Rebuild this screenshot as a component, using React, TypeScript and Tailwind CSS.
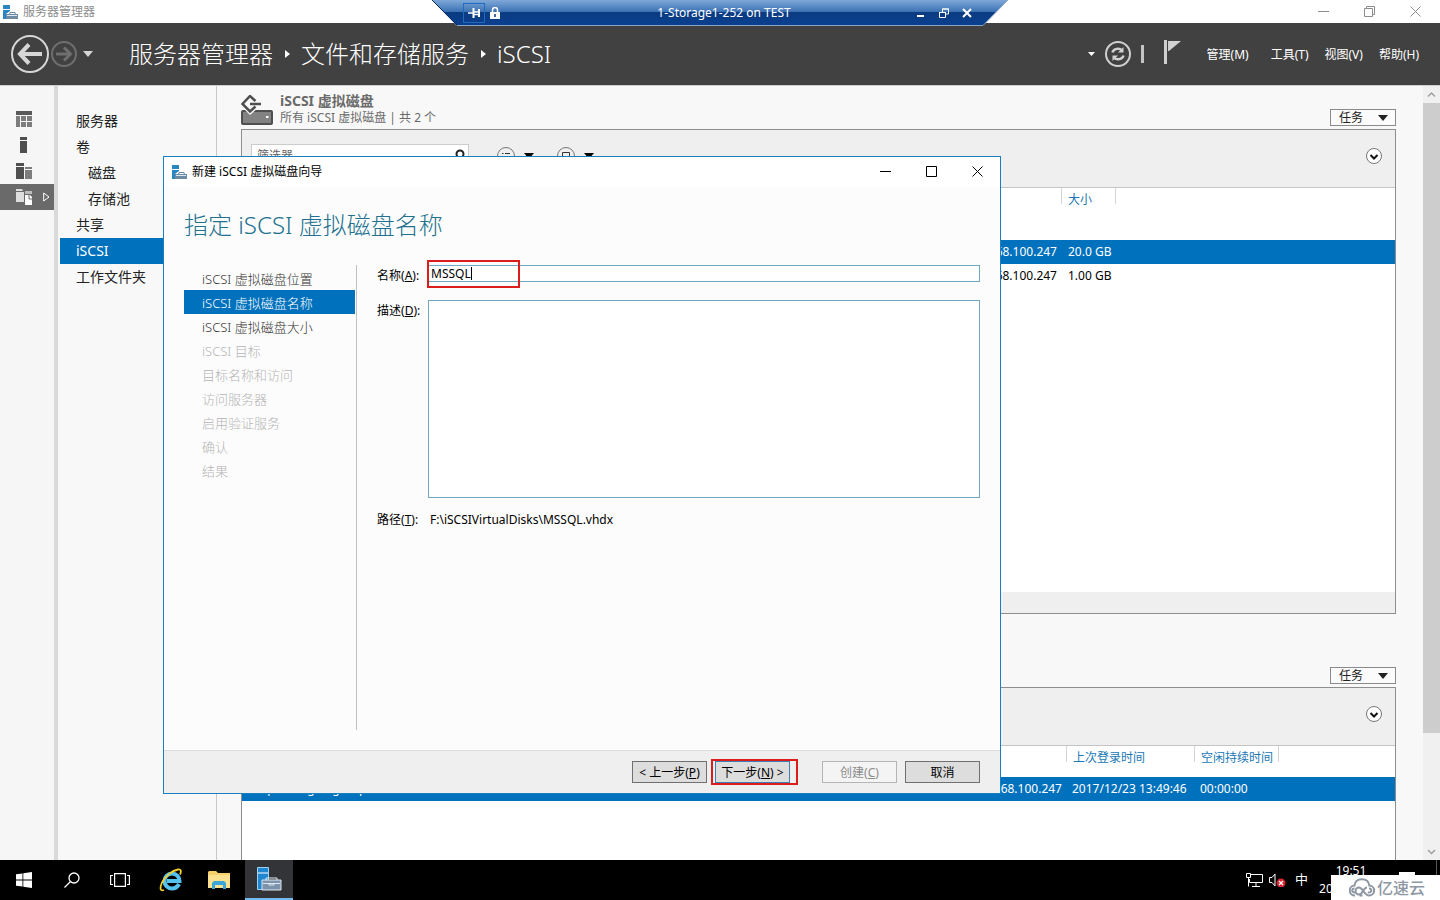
import { ReactNode, useState } from "react";
import clsx from "clsx";

const NAV_ITEMS = [
  { label: "服务器" },
  { label: "卷" },
  { label: "磁盘", nested: true },
  { label: "存储池", nested: true },
  { label: "共享" },
  { label: "iSCSI", active: true },
  { label: "工作文件夹" },
];

const STEPS = [
  { label: "iSCSI 虚拟磁盘位置", state: "done" },
  { label: "iSCSI 虚拟磁盘名称", state: "current" },
  { label: "iSCSI 虚拟磁盘大小", state: "done" },
  { label: "iSCSI 目标", state: "disabled" },
  { label: "目标名称和访问", state: "disabled" },
  { label: "访问服务器", state: "disabled" },
  { label: "启用验证服务", state: "disabled" },
  { label: "确认", state: "disabled" },
  { label: "结果", state: "disabled" },
];

const MENUS = ["管理(M)", "工具(T)", "视图(V)", "帮助(H)"];

const DISKS = [
  { address: "192.168.100.247", size: "20.0 GB", selected: true },
  { address: "192.168.100.247", size: "1.00 GB", selected: false },
];

const ServerIcon = () => (
  <svg width="15" height="14" viewBox="0 0 15 14" aria-hidden="true">
    <path d="M0 0h7v4H0zM0 5h7v1L3 9v5H0z" fill="#2a86c0" />
    <path d="M3 9h3l1-2h5l1 2h2v5H3z" fill="#6d8ba3" />
    <path d="M7 9l.7-1h3.600l.7 1z" fill="#fff" />
    <path d="M4 10.500h10" stroke="#dbe6ee" />
  </svg>
);

const Caret = ({ className }: { className?: string }) => (
  <svg width="10" height="6" viewBox="0 0 10 6" className={className} aria-hidden="true">
    <path d="M0 0h10L5 6z" fill="currentColor" />
  </svg>
);

const Crumb = () => (
  <svg width="5" height="8" viewBox="0 0 5 8" className="mr-[11px] ml-3 shrink-0" aria-hidden="true">
    <path d="M0 0l5 4-5 4z" fill="#fff" />
  </svg>
);

const WindowButton = ({
  label,
  path,
  className,
}: {
  label: string;
  path: string;
  className?: string;
}) => (
  <button
    type="button"
    aria-label={label}
    className={clsx("flex h-full w-[46px] items-center justify-center", className)}
  >
    <svg width="11" height="11" viewBox="0 0 11 11" fill="none" stroke="currentColor">
      <path d={path} />
    </svg>
  </button>
);

const Key = ({ text, letter }: { text: string; letter: string }) => (
  <>
    {text}(<u className="underline-offset-1">{letter}</u>)
  </>
);

const RemoteBar = () => (
  <div className="absolute top-0 left-1/2 flex h-[26px] w-[576px] -translate-x-1/2 items-center">
    <svg
      className="absolute inset-0"
      width="576"
      height="26"
      viewBox="0 0 576 26"
      aria-hidden="true"
    >
      <defs>
        <linearGradient id="bar" x1="0" y1="0" x2="0" y2="1">
          <stop offset="0" stopColor="#7fa8d8" />
          <stop offset="0.46" stopColor="#3c72b4" />
          <stop offset="0.47" stopColor="#0b3b80" />
          <stop offset="1" stopColor="#0a4090" />
        </linearGradient>
      </defs>
      <path d="M0 0h576l-25 25.500H25z" fill="url(#bar)" />
      <path d="M0 0l25 25.500h526L576 0" fill="none" stroke="#8ba5c6" />
      <path d="M0 0l25 25" stroke="#0a2c5c" />
    </svg>
    <div className="relative flex w-full items-center text-white">
      <button
        type="button"
        aria-label="Pin"
        className="ml-[31px] flex h-5 w-[22px] items-center justify-center border border-[#1d6cc0]"
      >
        <svg width="12" height="10" viewBox="0 0 12 10" fill="none" stroke="#fff">
          <path d="M0 5h5M6 4h5M6 6.500h5" strokeWidth="1.500" />
          <path d="M5.500 0v10M11 1v8" strokeWidth="2" />
        </svg>
      </button>
      <svg width="10" height="12" viewBox="0 0 10 12" className="ml-[5px]" aria-hidden="true">
        <path d="M2.500 6V3a2.500 2.500 0 0 1 5 0v3" fill="none" stroke="#fff" strokeWidth="1.500" />
        <path d="M0 5h10v7H0z" fill="#fff" />
        <path d="M5 7v3" stroke="#0b3b80" strokeWidth="1.500" />
      </svg>
      <span className="flex-1 pl-8 text-center text-xs">1-Storage1-252 on TEST</span>
      <div className="mr-9 flex gap-[13px]">
        <button type="button" aria-label="Minimize">
          <svg width="10" height="10" viewBox="0 0 10 10">
            <path d="M1 8h7" stroke="#fff" strokeWidth="2" />
          </svg>
        </button>
        <button type="button" aria-label="Restore">
          <svg width="10" height="10" viewBox="0 0 10 10" fill="none" stroke="#fff">
            <path d="M.5 4.500h6v5h-6zM0 4.500h7M3.500 4V1h6v5H7M3 1h7" />
          </svg>
        </button>
        <button type="button" aria-label="Close">
          <svg width="10" height="10" viewBox="0 0 10 10">
            <path d="M1 1l8 8M9 1L1 9" stroke="#fff" strokeWidth="2" />
          </svg>
        </button>
      </div>
    </div>
  </div>
);

const TitleBar = () => (
  <div className="flex h-[23px] shrink-0 items-center bg-white pr-0.5 pl-[3px] text-xs text-[#8c8c8c]">
    <ServerIcon />
    <span className="ml-[5px] flex-1">服务器管理器</span>
    <WindowButton label="最小化" path="M0 5.500h11" />
    <WindowButton label="还原" path="M.5 2.500h8v8h-8zM2.500 2V.5h8v8H9" />
    <WindowButton label="关闭" path="M.5.5l10 10M10.500.5l-10 10" />
  </div>
);

const Header = () => (
  <header className="flex h-[62px] shrink-0 items-center bg-[#414141] pr-[21px] pl-[11px] text-white">
    <button type="button" aria-label="后退">
      <svg width="38" height="38" viewBox="0 0 38 38" fill="none" stroke="#d6d6d6">
        <circle cx="19" cy="19" r="18" strokeWidth="2" />
        <path d="M31 19H10" strokeWidth="4" />
        <path d="M18 9.500L9 19l9 9.500" strokeWidth="4" />
      </svg>
    </button>
    <button type="button" aria-label="前进" className="ml-0.5">
      <svg width="26" height="26" viewBox="0 0 26 26" fill="none" stroke="#6f6f6f">
        <circle cx="13" cy="13" r="12" strokeWidth="2" />
        <path d="M5 13h14" strokeWidth="3" />
        <path d="M13 6.500l6.500 6.500-6.500 6.500" strokeWidth="3" />
      </svg>
    </button>
    <Caret className="ml-1.5 text-[#d6d6d6]" />
    <nav className="ml-9 flex flex-1 items-center text-2xl font-light whitespace-nowrap">
      <span>服务器管理器</span>
      <Crumb />
      <span>文件和存储服务</span>
      <Crumb />
      <span>iSCSI</span>
    </nav>
    <svg width="7" height="4" viewBox="0 0 7 4" aria-hidden="true">
      <path d="M0 0h7L3.500 4z" fill="#fff" />
    </svg>
    <button type="button" aria-label="刷新" className="ml-2.5">
      <svg width="26" height="26" viewBox="0 0 26 26" fill="none" stroke="#d0d0d0">
        <circle cx="13" cy="13" r="12" strokeWidth="2" />
        <path d="M7.500 11.500c1-4 7-5 9.500-2M18.500 14.500c-1 4-7 5-9.500 2" strokeWidth="2.500" />
        <path d="M18.500 6v5.500H13zM7.500 20v-5.500H13z" fill="#d0d0d0" stroke="none" />
      </svg>
    </button>
    <span className="ml-2.5 h-[18px] w-[3px] bg-[#c4c4c4]" />
    <button type="button" aria-label="通知" className="mr-[26px] ml-5">
      <svg width="17" height="24" viewBox="0 0 17 24" className="mb-1">
        <path d="M0 0h3v24H0z" fill="#d0d0d0" />
        <path d="M4 1h13L5 11H4z" fill="#d0d0d0" />
      </svg>
    </button>
    <nav className="flex gap-4 pt-0.5 text-xs">
      {MENUS.map((menu) => (
        <a key={menu} href="#" className="first:mr-1.5">
          {menu}
        </a>
      ))}
    </nav>
  </header>
);

const RailButton = ({
  label,
  active,
  children,
}: {
  label: string;
  active?: boolean;
  children: ReactNode;
}) => (
  <button
    type="button"
    aria-label={label}
    className={clsx("flex h-[26px] w-full items-center pl-4", active && "bg-[#6a6a6a]")}
  >
    <svg width="16" height="16" viewBox="0 0 16 16">
      {children}
    </svg>
    {active && (
      <svg width="7" height="10" viewBox="0 0 7 10" fill="none" stroke="#fff" className="ml-[11px]">
        <path d="M.7 1v8L6 5z" />
      </svg>
    )}
  </button>
);

const Rail = () => (
  <div className="w-[54px] shrink-0 bg-[#f6f6f6] pt-5">
    <RailButton label="仪表板">
      <path d="M0 0h16v4H0z" fill="#595959" />
      <path d="M0 5h4v11H0zM5 5h5v5H5zM11 5h5v5h-5zM5 11h5v5H5zM11 11h5v5h-5z" fill="#7d7d7d" />
    </RailButton>
    <RailButton label="本地服务器">
      <path d="M4 0h7v3H4zM4 4h7v12H4z" fill="#4f4f4f" />
    </RailButton>
    <RailButton label="所有服务器">
      <path d="M0 0h8v3H0zM0 4h8v12H0z" fill="#4f4f4f" />
      <path d="M9 4h7v2H9zM9 7h7v9H9z" fill="#7d7d7d" />
    </RailButton>
    <RailButton label="文件和存储服务" active>
      <path d="M0 2V0h6l1 2zM0 3h8v10H0z" fill="#dedede" />
      <path d="M9 2h7v3H9z" fill="#bdbdbd" />
      <path d="M9 6h5l3 3v7H9z" fill="#fff" />
      <path d="M13 6v4h3" fill="none" stroke="#6a6a6a" />
    </RailButton>
  </div>
);

const SideNav = () => (
  <nav className="w-[159px] shrink-0 border-r border-[#c8c8c8] bg-[#f8f8f8] pt-[22px] pl-0.5 text-sm text-[#222]">
    {NAV_ITEMS.map((item) => (
      <a
        key={item.label}
        href="#"
        className={clsx(
          "block h-[26px] leading-[26px]",
          item.nested ? "pl-7" : "pl-4",
          item.active && "bg-[#0071bc] text-white"
        )}
      >
        {item.label}
      </a>
    ))}
  </nav>
);

const TasksButton = () => (
  <button
    type="button"
    className="flex h-[17px] w-[66px] items-center justify-between border border-[#8a8a8a] bg-[#fbfbfb] pr-[7px] pl-2 text-xs text-[#222]"
  >
    任务
    <Caret />
  </button>
);

const Expander = () => (
  <button type="button" aria-label="展开" className="ml-auto">
    <svg width="16" height="16" viewBox="0 0 16 16" fill="none">
      <circle cx="8" cy="8" r="7.500" fill="#fff" stroke="#777" />
      <path d="M4.500 7L8 10.500 11.500 7" stroke="#111" strokeWidth="2" />
    </svg>
  </button>
);

const Toolbar = () => (
  <div className="flex h-[58px] items-start border-b border-[#c4c4c4] bg-[#efefef] pt-3.5 pr-[13px] pl-[9px]">
    <div className="flex w-full items-center">
      <div className="flex h-6 w-[218px] items-center border border-[#ccc] bg-white pr-[3px]">
        <input
          aria-label="筛选器"
          placeholder="筛选器"
          className="min-w-0 flex-1 pl-[5px] text-xs outline-none placeholder:text-[#666]"
        />
        <svg width="10" height="14" viewBox="0 0 10 14" fill="none" stroke="#222" strokeWidth="2">
          <circle cx="5" cy="5" r="3.500" />
          <path d="M3 8l-3 5" />
        </svg>
      </div>
      <button type="button" aria-label="筛选条件" className="ml-7 flex items-center gap-[9px]">
        <svg width="18" height="18" viewBox="0 0 18 18" fill="none" stroke="#777">
          <circle cx="9" cy="9" r="8.500" />
          <path d="M5 6.500h1.500M8 6.500h5M5 9.500h1.500M8 9.500h5M5 12.500h1.500M8 12.500h5" stroke="#333" />
        </svg>
        <Caret />
      </button>
      <button type="button" aria-label="保存查询" className="ml-[23px] flex items-center gap-[9px]">
        <svg width="18" height="18" viewBox="0 0 18 18" fill="none" stroke="#777">
          <circle cx="9" cy="9" r="8.500" />
          <path d="M5.500 5.500h7v7h-7zM7 9.500h4" stroke="#333" />
        </svg>
        <Caret />
      </button>
      <Expander />
    </div>
  </div>
);

const DisksTile = () => (
  <section>
    <div className="flex items-end pb-[3px]">
      <svg width="32" height="31" viewBox="0 0 32 31" className="mr-[7px]" fill="none" aria-hidden="true">
        <rect x="1" y="16" width="30" height="13" rx="1" fill="#828282" stroke="#4f4f4f" strokeWidth="2" />
        <path d="M2 13h15l-8 7z" fill="#f8f8f8" />
        <path d="M14.500 6L9 1 1.500 9 9 16.500l5.500-5M9 9h11" stroke="#4f4f4f" strokeWidth="2.500" />
        <path d="M25 21h2.500v2H25z" fill="#fff" />
      </svg>
      <div className="flex-1 text-[#6a6a6a]">
        <h2 className="text-sm leading-[17px] font-bold">iSCSI 虚拟磁盘</h2>
        <p className="text-xs leading-[17px]">所有 iSCSI 虚拟磁盘 | 共 2 个</p>
      </div>
      <TasksButton />
    </div>
    <div className="flex h-[485px] flex-col border border-[#8e8e8e] bg-white">
      <Toolbar />
      <table className="w-full table-fixed text-left text-xs">
        <thead>
          <tr className="h-[52px] align-top text-[#2077b4]">
            <th className="w-[819px]" aria-label="地址" />
            <th className="w-[55px] font-normal">
              <div className="h-4 border-x border-[#d4d4d4] pt-0.5 pl-1.5 leading-5">大小</div>
            </th>
            <th aria-label="状态" />
          </tr>
        </thead>
        <tbody>
          {DISKS.map((disk) => (
            <tr
              key={disk.size}
              className={clsx("h-6", disk.selected ? "bg-[#0071bc] text-white" : "text-black")}
            >
              <td className="pr-1 text-right">{disk.address}</td>
              <td className="pl-[7px] whitespace-nowrap">{disk.size}</td>
              <td />
            </tr>
          ))}
        </tbody>
      </table>
      <div className="mt-auto h-[21px] bg-[#efefef]" />
    </div>
  </section>
);

const TargetsTile = () => (
  <section className="flex flex-1 flex-col">
    <div className="flex justify-end pb-[3px]">
      <TasksButton />
    </div>
    <div className="flex-1 border border-b-0 border-[#8e8e8e] bg-white">
      <Toolbar />
      <table className="w-full table-fixed text-left text-xs whitespace-nowrap">
        <thead>
          <tr className="h-[31px] align-top text-[#2077b4]">
            <th className="w-[320px]" aria-label="名称" />
            <th className="w-[504px]" aria-label="目标" />
            <th className="w-32 font-normal">
              <div className="h-4 border-l border-[#d4d4d4] pt-0.5 pl-1.5 leading-5">上次登录时间</div>
            </th>
            <th className="w-[85px] font-normal">
              <div className="h-4 border-x border-[#d4d4d4] pt-0.5 pl-1.5 leading-5">空闲持续时间</div>
            </th>
            <th aria-label="状态" />
          </tr>
        </thead>
        <tbody>
          <tr className="h-6 bg-[#0071bc] text-white">
            <td className="pl-2">vmp-storage1-group</td>
            <td className="pr-1 text-right">192.168.100.247</td>
            <td className="pl-1.5">2017/12/23 13:49:46</td>
            <td className="pl-1.5">00:00:00</td>
            <td />
          </tr>
        </tbody>
      </table>
    </div>
  </section>
);

const ScrollBar = () => (
  <div className="flex w-[17px] shrink-0 flex-col items-center bg-[#f0f0f0] text-[#a0a0a0]">
    <svg width="9" height="17" viewBox="0 0 9 17" fill="none" stroke="currentColor" strokeWidth="1.500">
      <path d="M1 10.500L4.500 7 8 10.500" />
    </svg>
    <div className="w-full flex-[629] bg-[#cdcdcd]" />
    <div className="flex-[110]" />
    <svg width="9" height="17" viewBox="0 0 9 17" fill="none" stroke="currentColor" strokeWidth="1.500">
      <path d="M1 7l3.500 3.500L8 7" />
    </svg>
  </div>
);

const BUTTON = "h-[22px] w-[75px] border pt-px text-xs whitespace-nowrap";

const Wizard = () => {
  const [name, setName] = useState("MSSQL");
  const [description, setDescription] = useState("");

  return (
    <div
      role="dialog"
      aria-label="新建 iSCSI 虚拟磁盘向导"
      className="absolute top-[156px] left-[163px] flex h-[638px] w-[838px] flex-col border border-[#1a7fbf] bg-[#fcfcfc] text-black"
    >
      <div className="flex h-[29px] shrink-0 items-center bg-white pl-2 text-xs">
        <ServerIcon />
        <span className="ml-[5px] flex-1">新建 iSCSI 虚拟磁盘向导</span>
        <WindowButton label="最小化" path="M0 5.500h11" />
        <WindowButton label="最大化" path="M.5.5h10v10H.5z" />
        <WindowButton label="关闭" path="M.5.5l10 10M10.500.5l-10 10" />
      </div>
      <h1 className="px-5 pt-[23px] pb-6 text-2xl font-light text-[#21718f]">
        指定 iSCSI 虚拟磁盘名称
      </h1>
      <div className="flex flex-1 px-5 pb-5">
        <ol className="w-[173px] shrink-0 border-r border-[#c0c0c0] pt-px pr-px text-[13px] font-light text-[#333]">
          {STEPS.map((step) => (
            <li
              key={step.label}
              className={clsx(
                "h-6 pl-[18px] leading-[26px]",
                step.state === "current" && "bg-[#0071bc] text-white",
                step.state === "disabled" && "text-[#b4b4b4]"
              )}
            >
              {step.label}
            </li>
          ))}
        </ol>
        <div className="ml-5 flex-1 text-xs">
          <div className="flex h-[17px]">
            <label htmlFor="disk-name" className="w-[51px] leading-[22px]">
              <Key text="名称" letter="A" />:
            </label>
            <div className="relative flex-1">
              <input
                id="disk-name"
                className="h-[17px] w-full border border-[#6fa9c4] bg-white px-0.5 text-xs caret-transparent outline-none"
                value={name}
                onChange={(e) => setName(e.target.value)}
              />
              <span className="pointer-events-none absolute top-0.5 left-[3px] h-[13px] border-r border-black text-transparent">
                {name}
              </span>
              <span className="pointer-events-none absolute -top-[5px] -left-px h-7 w-[93px] border-2 border-[#dd1c1c]" />
            </div>
          </div>
          <div className="mt-[18px] flex">
            <label htmlFor="disk-description" className="w-[51px] leading-[22px]">
              <Key text="描述" letter="D" />:
            </label>
            <textarea
              id="disk-description"
              className="h-[198px] flex-1 resize-none border border-[#6fa9c4] bg-white p-1 outline-none"
              value={description}
              onChange={(e) => setDescription(e.target.value)}
            />
          </div>
          <div className="mt-[11px] flex leading-[22px]">
            <span className="w-[53px]">
              <Key text="路径" letter="T" />:
            </span>
            <span>F:\iSCSIVirtualDisks\{name}.vhdx</span>
          </div>
        </div>
      </div>
      <div className="flex h-[43px] shrink-0 items-center justify-end gap-2 border-t border-[#dcdcdc] bg-[#efefef] pr-5">
        <button type="button" className={clsx(BUTTON, "border-[#707070] bg-[#dddddd]")}>
          &lt; <Key text="上一步" letter="P" />
        </button>
        <div className="relative mr-6 flex">
          <button type="button" className={clsx(BUTTON, "border-[#3c7fb1] bg-[#dddddd]")}>
            <Key text="下一步" letter="N" /> &gt;
          </button>
          <span className="pointer-events-none absolute -top-0.5 -left-1 h-[26px] w-[87px] border-2 border-[#dd1c1c]" />
        </div>
        <button
          type="button"
          disabled
          className={clsx(BUTTON, "border-[#b5b5b5] bg-[#f4f4f4] text-[#8c8c8c]")}
        >
          <Key text="创建" letter="C" />
        </button>
        <button type="button" className={clsx(BUTTON, "border-[#707070] bg-[#dddddd]")}>
          取消
        </button>
      </div>
    </div>
  );
};

const TaskButton = ({
  label,
  className,
  children,
}: {
  label: string;
  className?: string;
  children: ReactNode;
}) => (
  <button
    type="button"
    aria-label={label}
    className={clsx("flex h-full w-12 items-center justify-center", className)}
  >
    {children}
  </button>
);

const Taskbar = () => (
  <footer className="flex h-10 shrink-0 items-center bg-black text-white">
    <TaskButton label="开始">
      <svg width="16" height="16" viewBox="0 0 16 16" fill="#fff">
        <path d="M0 2.300l6.500-.9v6.200H0zM7.300 1.300L16 0v7.600H7.300zM0 8.400h6.500v6.200L0 13.700zM7.300 8.400H16V16l-8.700-1.300z" />
      </svg>
    </TaskButton>
    <TaskButton label="搜索">
      <svg width="16" height="16" viewBox="0 0 16 16" fill="none" stroke="#fff" strokeWidth="1.300">
        <circle cx="10" cy="6" r="5" />
        <path d="M6.500 9.500L.5 15.500" />
      </svg>
    </TaskButton>
    <TaskButton label="任务视图" className="mr-[3px]">
      <svg width="20" height="14" viewBox="0 0 20 14" fill="none" stroke="#fff" strokeWidth="1.200">
        <path d="M4.600.6h10.800v12.800H4.600zM3 2.500H.6v9H3M17 2.500h2.400v9H17" />
      </svg>
    </TaskButton>
    <TaskButton label="Internet Explorer">
      <svg width="24" height="24" viewBox="0 0 24 24" fill="none">
        <path d="M20 16c-1.500 3-4 4.500-7 4.500A7.500 7.500 0 1 1 20.500 13H8" stroke="#55c3f0" strokeWidth="4" />
        <path d="M5 22C1 23.500.5 20 3 14.500 6 8.500 13 2.500 19 1.500c4-.5 3 3 2 5" stroke="#f3cf2d" strokeWidth="1.800" />
      </svg>
    </TaskButton>
    <TaskButton label="文件资源管理器" className="mr-0.5">
      <svg width="22" height="18" viewBox="0 0 22 18">
        <path d="M0 1l1-1h7l2 2h12v15H0z" fill="#f6cf6b" />
        <path d="M0 4h22v13H0z" fill="#fbe08f" />
        <path d="M4 18v-6l2-2h10l2 2v6h-3v-4H7v4z" fill="#39a5d8" />
      </svg>
    </TaskButton>
    <TaskButton label="服务器管理器" className="border-b-2 border-[#76b9ed] bg-[#333438]">
      <svg width="25" height="24" viewBox="0 0 25 24">
        <path d="M.5.5h11v22H.5z" fill="#1f86d2" stroke="#9fd0f2" />
        <path d="M1 6h10" stroke="#fff" />
        <path d="M5 13h19v10H5z" fill="#7d93ab" stroke="#dfe8f0" />
        <path d="M9 13v-2h11v2M6 16.500h17M12 16v2h5v-2" fill="none" stroke="#dfe8f0" />
      </svg>
    </TaskButton>
    <div className="ml-auto flex h-full items-center">
      <svg width="17" height="14" viewBox="0 0 17 14" fill="none" stroke="#fff" aria-hidden="true">
        <path d="M5 1.500h11.500v8H3.500V6M.5.5h4v4h-4zM2.500 5v8.500M10 10v3M6 13.500h8" />
      </svg>
      <svg width="18" height="14" viewBox="0 0 18 14" fill="none" className="ml-[6px]" aria-hidden="true">
        <path d="M.5 4.500H3l3-3.500v12L3 9.500H.5z" stroke="#fff" />
        <circle cx="12" cy="10" r="4.500" fill="#d8232f" />
        <path d="M10 8l4 4M14 8l-4 4" stroke="#fff" strokeWidth="1.300" />
      </svg>
      <span className="ml-2 text-[13px]">中</span>
      <div className="ml-2 w-[70px] text-center text-xs leading-[18px]">
        <div>19:51</div>
        <div>2017/12/25</div>
      </div>
      <svg width="16" height="16" viewBox="0 0 16 16" className="mr-[21px] ml-[13px]" aria-hidden="true">
        <path d="M0 0h16v11H8l-3 4v-4H0z" fill="#fff" />
      </svg>
      <span className="mr-[3px] h-full w-px bg-[#555]" />
    </div>
  </footer>
);

const Watermark = () => (
  <div className="absolute right-0 bottom-0 flex h-[25px] w-[109px] items-center bg-white pl-[18px] text-base font-medium text-[#8e97a3]">
    <svg width="26" height="19" viewBox="0 0 26 19" fill="none" stroke="#8e97a3" strokeWidth="2" className="mr-0.5">
      <path d="M6 17.500a5 5 0 0 1-.5-10C6 3.500 9 1.200 12.800 1.200c4 0 7 2.300 7.500 6.300a5 5 0 0 1-.3 10c-5 0-6-8-10-8a3.500 3.500 0 0 0 0 7c4 0 4-7 8-7M10.500 17.500h3" />
      <path d="M5.500 10.500a2 2 0 1 0 1 3.500M20 10.500a2 2 0 1 1-1 3.500" />
    </svg>
    亿速云
  </div>
);

export default function App() {
  return (
    <div className="relative flex h-screen flex-col overflow-hidden bg-[#f8f8f8] font-['Noto_Sans','Noto_Sans_CJK_SC',sans-serif]">
      <TitleBar />
      <Header />
      <main className="flex min-h-0 flex-1 border-t border-[#cfcfcf]">
        <Rail />
        <div className="w-1 shrink-0 bg-[#d9d9d9]" />
        <SideNav />
        <div className="flex min-w-0 flex-1 flex-col gap-[53px] pt-1.5 pr-[27px] pl-6">
          <DisksTile />
          <TargetsTile />
        </div>
        <ScrollBar />
      </main>
      <Taskbar />
      <RemoteBar />
      <Wizard />
      <Watermark />
    </div>
  );
}
